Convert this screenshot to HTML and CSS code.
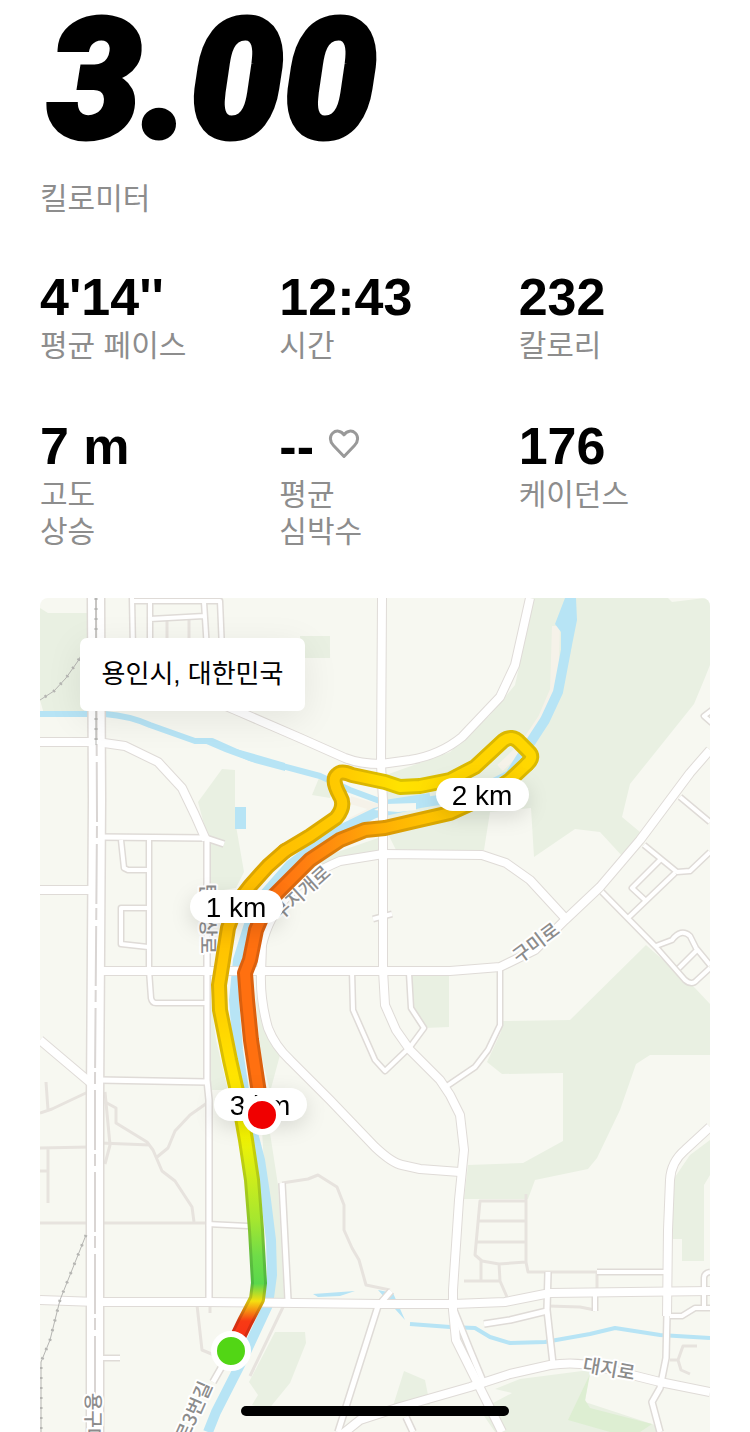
FILE: index.html
```
<!DOCTYPE html>
<html lang="ko">
<head>
<meta charset="utf-8">
<meta name="viewport" content="width=device-width, initial-scale=1">
<title>러닝 기록</title>
<link rel="stylesheet" href="styles.css">
</head>
<body>
<main class="run">
  <header class="distance">
    <h1 class="distance-value">3.00</h1>
    <p class="label">킬로미터</p>
  </header>

  <dl class="stats">
    <div class="stat"><dd class="value">4'14''</dd><dt class="label">평균 페이스</dt></div>
    <div class="stat"><dd class="value">12:43</dd><dt class="label">시간</dt></div>
    <div class="stat"><dd class="value">232</dd><dt class="label">칼로리</dt></div>
    <div class="stat"><dd class="value">7 m</dd><dt class="label">고도<br>상승</dt></div>
    <div class="stat">
      <dd class="value value-icon">--
        <svg class="heart" viewBox="0 0 32 32" aria-hidden="true"><path d="M16 28.500L5.500 17.500C1.500 13.500 1.500 8 4.800 5C8 2 13 2.500 16 6.800C19 2.500 24 2 27.200 5C30.500 8 30.500 13.500 26.500 17.500Z"/></svg>
      </dd>
      <dt class="label">평균<br>심박수</dt>
    </div>
    <div class="stat"><dd class="value">176</dd><dt class="label">케이던스</dt></div>
  </dl>

  <section class="map-card">
    <svg class="map" viewBox="40 598 670 834" role="img" aria-label="러닝 경로 지도">
      <defs>
        <linearGradient id="g-out" gradientUnits="userSpaceOnUse" x1="0" y1="1351" x2="0" y2="851">
          <stop offset="0" stop-color="#f82a18"/><stop offset=".06" stop-color="#f83a14"/>
          <stop offset=".1" stop-color="#f5e010"/><stop offset=".135" stop-color="#5bd84c"/>
          <stop offset=".19" stop-color="#6fdc48"/><stop offset=".26" stop-color="#a4e630"/>
          <stop offset=".36" stop-color="#d4ee18"/><stop offset=".43" stop-color="#f2f202"/>
          <stop offset=".53" stop-color="#ffe800"/><stop offset=".66" stop-color="#ffd400"/>
          <stop offset=".85" stop-color="#ffbe00"/><stop offset="1" stop-color="#ffc000"/>
        </linearGradient>
        <linearGradient id="g-loop" gradientUnits="userSpaceOnUse" x1="285" y1="0" x2="538" y2="0">
          <stop offset="0" stop-color="#ffc000"/><stop offset=".25" stop-color="#ffcc00"/>
          <stop offset=".45" stop-color="#ffe200"/><stop offset=".75" stop-color="#ffd400"/><stop offset="1" stop-color="#ffd800"/>
        </linearGradient>
        <linearGradient id="g-back" gradientUnits="userSpaceOnUse" x1="270" y1="0" x2="538" y2="0">
          <stop offset="0" stop-color="#ff7010"/><stop offset=".12" stop-color="#ff7d10"/>
          <stop offset=".3" stop-color="#ff990a"/><stop offset=".42" stop-color="#ffb004"/>
          <stop offset=".6" stop-color="#ffc400"/><stop offset="1" stop-color="#ffd800"/>
        </linearGradient>
        <path id="r-out" d="M231 1351L245 1322L257 1299L259 1283L256 1230L252 1180L246 1140L239 1100L230 1060L220 1010L219 985L223 960L228 928L237 903L250 886L268 866L285 851"/>
        <path id="r-loop" d="M285 851L310 836L336 818Q346 806 340 796Q331 780 337 775Q341 770 352 775L385 782L400 787L420 786L450 780L475 767L503 741Q512 734 520 743L528 751Q535 757 527 764"/>
        <path id="r-back" d="M527 764L510 780L485 797L450 813L415 821L385 828L365 830L340 840L310 860L288 882L268 902L256 930L250 960L245 973L247 1000L251 1040L257 1080L262 1112"/>
        <g id="roads-main">
          <path d="M40 742H97L125 746L158 762L182 788L195 815L206 840"/>
          <path d="M40 890H92M97 971H450L500 967L535 950L565 920L600 887L640 840L690 773L710 750"/>
          <path d="M382 598L381 765L383 800V970L385 1005L396 1030L410 1050L440 1080L450 1095L460 1115L464 1150L459 1200L453 1290V1310L456 1340L480 1388L502 1432"/>
          <path d="M530 598L515 665L500 697L462 737Q440 755 410 760L381 764Q360 764 345 758L300 738L240 712L200 695"/>
          <path d="M565 918L530 880L506 863L482 855L383 854L340 861Q275 888 262 945L261 973Q260 1000 268 1028Q275 1046 290 1060L330 1100L375 1147Q392 1163 402 1165L420 1169L460 1172"/>
          <path d="M40 1040L92 1084M40 1300L97 1302H207L380 1304H453L505 1302L550 1293L710 1291"/>
          <path d="M340 1436L360 1420L400 1407L470 1387L510 1374L550 1365Q575 1361 600 1367L660 1382L710 1392"/>
          <path d="M710 1127L685 1150Q671 1162 670 1180L668 1230L667 1316"/>
        </g>
        <g id="roads-mid">
          <path d="M100 837L206 838L224 844M207 838V1080L209 1100V1300M100 1080L207 1082"/>
          <path d="M391 1291L378 1306L338 1432M288 1300L282 1183M245 1326L213 1382"/>
          <path d="M667 1314L666 1358L660 1388L652 1402L660 1432M548 1272L547 1310L553 1364M484 1324L510 1320L547 1311"/>
          <path d="M454 1310L470 1350L485 1386M406 1417L413 1432"/>
        </g>
        <g id="roads-small">
          <path d="M149 840V970L151 998Q152 1003 156 1003H206M121 840L124 868L128 870H148M148 908H121V944L148 947"/>
          <path d="M352 971L353 1010L375 1060L385 1071L410 1047L424 1028L411 1008L409 973M500 967V1025L488 1050L475 1067L447 1086M373 919L392 914"/>
          <path d="M207 1224L248 1226M103 1358H120M597 1272H667M595 1293V1311M670 1316H682L695 1308H710M704 1308V1278Q704 1273 710 1272"/>
          <path d="M644 845L677 872L690 871L710 852M660 860L632 888L645 900M675 873L628 918M602 892L656 947L685 980Q692 986 697 980L710 968M656 946L672 940Q681 928 690 936L696 948L710 965M697 950L679 968M680 797L710 822M712 710L704 716L712 723"/>
          <path d="M132 598L133 650M133 601H220L222 650M150 602V650M150 619L204 616M204 602L207 650"/>
        </g>
      </defs>

      <rect class="land" x="40" y="598" width="670" height="834"/>

      <g class="park">
        <path d="M40 608L48 613H90V714H44L40 700Z"/>
        <path d="M300 636H330V658H300ZM198 802L222 769L235 770V820L244 872L236 888L211 892V850Z"/>
        <path d="M531 598H668L672 602L705 598H710V665L704 680L694 704L630 784L622 817L640 832L623 857L600 832L575 829L534 857L531 808L490 812L484 850H396L386 830V775L450 752L490 715L515 685L525 640Z"/>
        <path d="M412 975H449V1027L425 1028L413 1005ZM314 860L378 838V850L335 860L310 872ZM319 778L335 785L330 798L312 795Z"/>
        <path d="M646 945L570 1020L502 1021L501 1032L487 1062L502 1074L563 1073V1141L523 1163L468 1165L464 1199H528L535 1180L588 1169L597 1158L620 1110L636 1064L650 1055H710V1004L695 988Z"/>
        <path d="M710 1140L690 1155L673 1180V1239H682V1261H704V1185L710 1175Z"/>
        <path d="M495 1389L520 1379L590 1370L585 1402L655 1425L660 1432H495L480 1410L512 1393Z"/>
        <path d="M275 1332H305L306 1343L290 1383L268 1410L252 1405L258 1395L249 1382ZM404 1371L425 1380L430 1405L393 1406Z"/>
        <path d="M262 1130L270 1133L278 1185L284 1298H270L266 1200ZM211 1000L216 1040L228 1090H211ZM255 990L262 1025L280 1055L270 1092L260 1050ZM266 900L276 902L256 965H248Z"/>
      </g>
      <path class="park-bright" d="M590 1374L568 1420L610 1432H640L652 1424L590 1408L585 1400Z"/>
      <path class="sand" d="M556 626L554 690L542 718L524 745L500 768M350 800L378 808L350 822"/>

      <g class="water">
        <path class="river" d="M568 620L566 650L558 692L545 720L532 740L510 775L470 795L420 803L375 813L330 835L290 865L255 905L238 960L234 1000L238 1050L247 1110L260 1160L266 1200L271 1240L272 1275L268 1305L240 1365L216 1412L208 1432"/>
        <path class="canal" d="M40 714H105Q130 716 150 725L195 741H212L250 758L275 764L320 776L350 790L385 803L430 796"/>
        <path class="stream" d="M410 1324L450 1327L475 1328L490 1337L510 1343L545 1342L590 1334L615 1328L660 1335L710 1338"/>
        <path class="pool" d="M565 598H576L577 620L571 650H561L561 632L555 624ZM235 807H246V829H235ZM313 1294L355 1291L340 1296L318 1297ZM378 1290L393 1293L405 1320L395 1309ZM190 737L240 750L285 763V771L255 763L225 752Z"/>
      </g>
      <path class="islet" d="M374 810L386 804L416 803V810L398 812Z"/>

      <g class="lane">
        <path d="M46 1082L48 1110M40 1113L52 1109L88 1092M40 1148L90 1147M48 1148V1203M40 1171H48M40 1223H207M105 1092L110 1145L105 1164"/>
        <path d="M105 1102L116 1108V1123L147 1142L153 1150L162 1171L175 1181L192 1207L194 1222M100 1143L150 1145M157 1157L168 1148L175 1131L190 1115L207 1103"/>
        <path d="M197 1305L202 1350L214 1355M210 1302V1313M284 1305L250 1376M282 1183L308 1179L318 1175L337 1187L344 1205V1230L352 1248L359 1260L366 1285L390 1290"/>
        <path d="M526 1194V1262L528 1272H597V1290M526 1201H480L475 1255L482 1261L499 1264L526 1262M478 1221H526M476 1242H526M481 1261V1281M464 1281H500M499 1263L500 1281L507 1297M548 1306L580 1307L595 1310"/>
        <path d="M697 1346H683L678 1360L681 1370L690 1374M670 1360H678M167 620V650M189 620V650"/>
      </g>

      <use class="road-edge small" href="#roads-small"/>
      <use class="road-edge mid" href="#roads-mid"/>
      <use class="road-edge main" href="#roads-main"/>
      <path class="road-edge trunk" d="M96 598L97 800L95 1100V1432"/>
      <use class="road small" href="#roads-small"/>
      <use class="road mid" href="#roads-mid"/>
      <use class="road main" href="#roads-main"/>
      <path class="road trunk" d="M96 598L97 800L95 1100V1432"/>
      <path class="median" d="M96 598L97 820L95 1080V1400"/>
      <path class="rail" d="M96 598V745M84 650L78 661L66 678L54 691L40 700M86 1235L70 1275L60 1300L50 1340L41 1362V1432"/>
      <path class="rail-tie" d="M96 598V745M84 650L78 661L66 678L54 691L40 700M86 1235L70 1275L60 1300L50 1340L41 1362V1432"/>

      <g class="street">
        <text transform="translate(201 884) rotate(90)">탄천상로</text>
        <text transform="translate(280 921) rotate(-42)">무지개로</text>
        <text transform="translate(519 964) rotate(-37)">구미로</text>
        <text transform="translate(582 1371) rotate(10)">대지로</text>
        <text transform="translate(86 1393) rotate(90)">용구대로</text>
        <text transform="translate(187 1443) rotate(-66)">로3번길</text>
      </g>

      <g class="route-edge">
        <use href="#r-back" stroke="url(#g-back)"/>
        <use href="#r-loop" stroke="url(#g-loop)"/>
        <use href="#r-out" stroke="url(#g-out)"/>
      </g>
      <g class="route">
        <use href="#r-back" stroke="url(#g-back)"/>
        <use href="#r-loop" stroke="url(#g-loop)"/>
        <use href="#r-out" stroke="url(#g-out)"/>
      </g>

      <g class="split"><rect x="190" y="890" width="93" height="33" rx="17"/><text x="236" y="917">1 km</text></g>
      <g class="split"><rect x="436" y="778" width="93" height="33" rx="17"/><text x="482" y="805">2 km</text></g>
      <g class="split"><rect x="214" y="1088" width="93" height="33" rx="17"/><text x="260" y="1115">3 km</text></g>
      <circle class="marker start" cx="231" cy="1351" r="17"/>
      <circle class="marker finish" cx="262" cy="1115" r="17"/>
    </svg>
    <p class="place">용인시, 대한민국</p>
  </section>
</main>
<div class="home-bar"></div>
</body>
</html>
```
FILE: styles.css
```
* {
  box-sizing: border-box;
}

body {
  margin: 0;
  background: #fff;
  color: #000;
  font-family: "Liberation Sans", "Noto Sans CJK KR", sans-serif;
}

h1, p, dl, dd {
  margin: 0;
}

.run {
  padding: 0 40px;
}

.distance-value {
  margin-bottom: 18px;
  padding-left: 8px;
  font-family: Roboto, sans-serif;
  font-size: 166px;
  font-style: italic;
  font-weight: 900;
  line-height: 162px;
  -webkit-text-stroke: 5px #000;
}

.label {
  color: #8d8d8d;
  font-size: 30px;
  line-height: 37px;
}

.stats {
  display: grid;
  grid-template-columns: repeat(3, 1fr);
  gap: 52px 48px;
  margin: 50px 0 48px;
}

.stat {
  display: flex;
  flex-direction: column;
}

.value {
  font-size: 52px;
  font-weight: 700;
  line-height: 60px;
  white-space: nowrap;
}

.value-icon {
  display: flex;
  align-items: center;
  gap: 14px;
}

.heart {
  width: 32px;
  height: 32px;
  margin-bottom: 4px;
  fill: none;
  stroke: #999;
  stroke-width: 3;
  stroke-linejoin: round;
}

.map-card {
  position: relative;
  overflow: hidden;
  border-radius: 8px 8px 0 0;
}

.map {
  display: block;
  width: 100%;
  height: auto;
  fill: none;
  stroke-linejoin: round;
}

.place {
  position: absolute;
  top: 40px;
  left: 40px;
  min-width: 225px;
  padding: 18px 20px;
  border-radius: 7px;
  background: #fff;
  box-shadow: 0 8px 36px rgba(0, 0, 0, 0.08);
  font-size: 26px;
  line-height: 37px;
  text-align: center;
}

.land { fill: #f7f8f1; }
.park { fill: #e9f0e2; }
.park-bright { fill: #ddeed2; }
.sand { stroke: #f5f2e9; stroke-width: 8; }
.islet { fill: #f7f8f1; }
.water { stroke: #b7e4f5; }
.pool { fill: #b7e4f5; stroke: none; }
.river { stroke-width: 10; }
.canal { stroke-width: 6; }
.stream { stroke-width: 4; }
.lane { stroke: #e7e3de; stroke-width: 3; }

.road-edge { stroke: #dfdbd7; }
.road-edge.small { stroke-width: 7; }
.road-edge.mid { stroke-width: 8; }
.road-edge.main { stroke-width: 10; }
.road-edge.trunk { stroke-width: 19; }

.road { stroke: #fff; }
.road.small { stroke-width: 4; }
.road.mid { stroke-width: 5; }
.road.main { stroke-width: 8; }
.road.trunk { stroke-width: 16; }

.median { stroke: #d9d5d3; stroke-width: 2; stroke-dasharray: 60 4 12 6; }
.rail { stroke: #b5b5b2; stroke-width: 1; }
.rail-tie { stroke: #b5b5b2; stroke-width: 3; stroke-dasharray: 2 8; }

.street {
  fill: #8c8c8c;
  stroke: #fff;
  stroke-width: 4;
  paint-order: stroke;
  font-family: "Noto Sans CJK KR", sans-serif;
  font-size: 19px;
  font-weight: 500;
}

.route-edge {
  stroke-width: 16;
  stroke-linecap: round;
  filter: brightness(0.86);
}

.route {
  stroke-width: 10;
  stroke-linecap: round;
}

.split {
  fill: #fff;
  filter: drop-shadow(0 6px 10px rgba(0, 0, 0, 0.12));
}

.split text {
  fill: #000;
  font-size: 28px;
  text-anchor: middle;
}

.marker {
  stroke: #fff;
  stroke-width: 6;
}

.start { fill: #52d615; }
.finish { fill: #f00000; }

.home-bar {
  position: fixed;
  bottom: 16px;
  left: 50%;
  width: 268px;
  height: 10px;
  margin-left: -134px;
  border-radius: 5px;
  background: #000;
}
```
